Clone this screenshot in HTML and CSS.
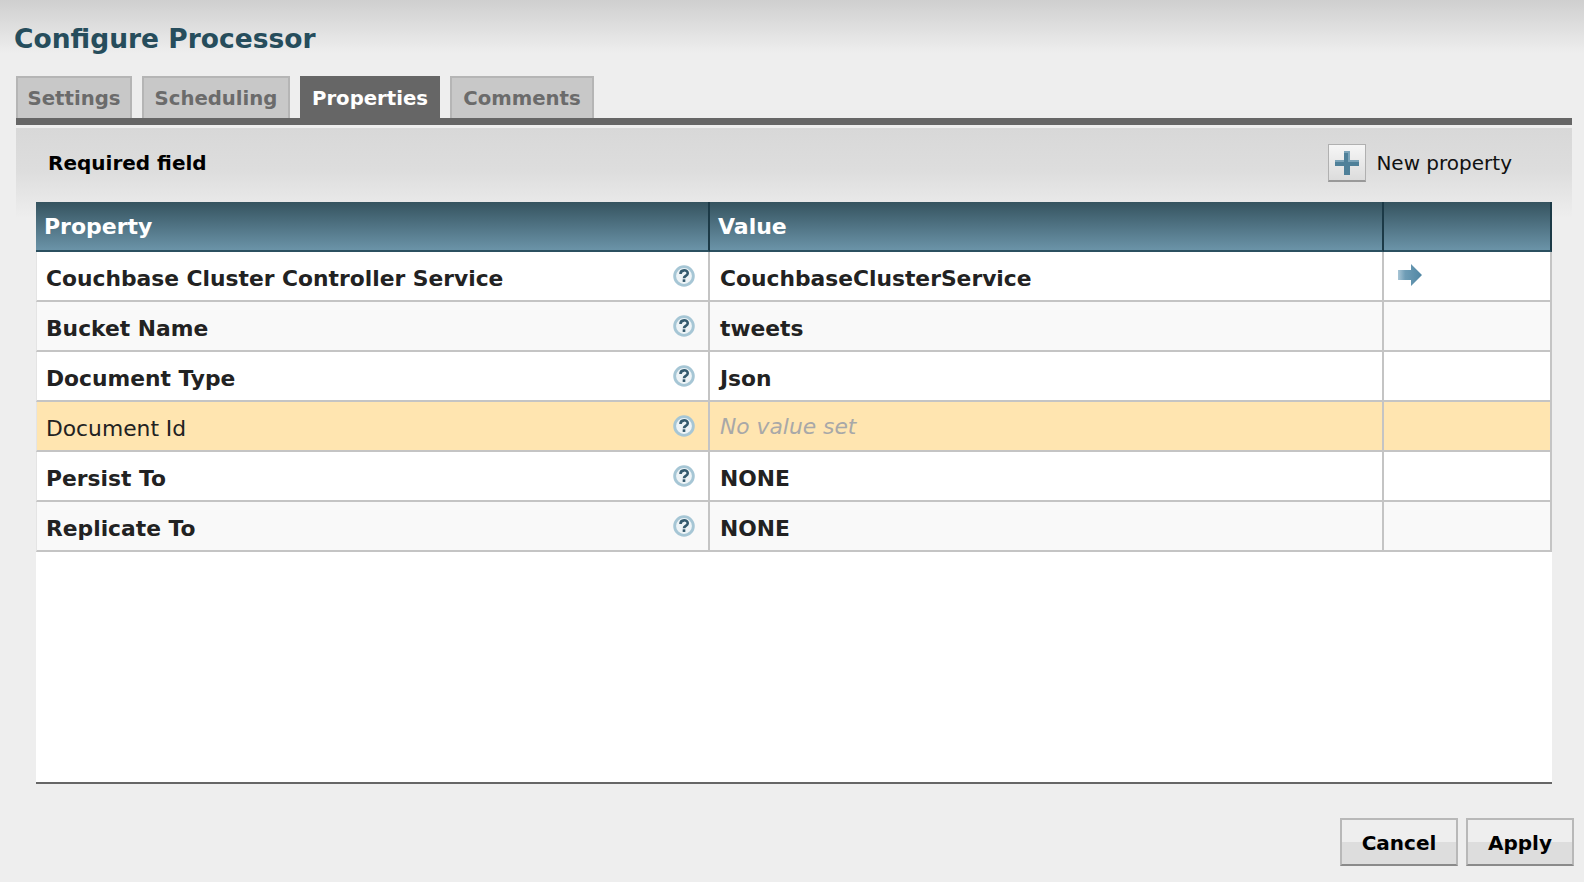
FILE: index.html
```html
<!DOCTYPE html>
<html lang="en">
  <head>
    <meta charset="UTF-8" />
    <title>Configure Processor</title>
    <link rel="stylesheet" href="styles.css">
  </head>
  <body>
    <header class="title-bar">
      <h1>Configure Processor</h1>
    </header>

    <nav class="tabs">
      <a class="tab tab-settings">Settings</a>
      <a class="tab tab-scheduling">Scheduling</a>
      <a class="tab tab-properties active">Properties</a>
      <a class="tab tab-comments">Comments</a>
    </nav>

    <main class="panel">
      <div class="toolbar">
        <span class="required">Required field</span>
        <div class="new-property">
          <span class="plus-button">
            <svg width="26" height="26" viewBox="0 0 26 26">
              <path d="M10 1h6v9h9v6h-9v9h-6v-9H1v-6h9z" fill="#4f8099" />
              <path d="M10 1h6v9h9v2H14V3h-4z" fill="#7ba3b8" />
              <path d="M1 10h9v2H1z" fill="#7ba3b8" />
            </svg>
          </span>
          <span>New property</span>
        </div>
      </div>

      <div class="table">
        <div class="row head">
          <div class="cell">Property</div>
          <div class="cell">Value</div>
          <div class="cell"></div>
        </div>

        <div class="row">
          <div class="cell name"><span>Couchbase Cluster Controller Service</span>
            <svg class="help" viewBox="0 0 20 20"><use href="#help" /></svg></div>
          <div class="cell value">CouchbaseClusterService</div>
          <div class="cell action">
            <svg width="26" height="24" viewBox="0 0 26 24">
              <defs>
                <linearGradient id="arrowFade" x1="0" x2="1" y1="0" y2="0">
                  <stop offset="0" stop-color="#a9c6d6" />
                  <stop offset="0.300" stop-color="#6f9db6" />
                  <stop offset="1" stop-color="#4f86a3" />
                </linearGradient>
              </defs>
              <path d="M1 7h13V1l11 11-11 11v-6H1z" fill="url(#arrowFade)" />
            </svg>
          </div>
        </div>
        <div class="row odd">
          <div class="cell name"><span>Bucket Name</span>
            <svg class="help" viewBox="0 0 20 20"><use href="#help" /></svg></div>
          <div class="cell value">tweets</div>
          <div class="cell"></div>
        </div>
        <div class="row">
          <div class="cell name"><span>Document Type</span>
            <svg class="help" viewBox="0 0 20 20"><use href="#help" /></svg></div>
          <div class="cell value">Json</div>
          <div class="cell"></div>
        </div>
        <div class="row unset">
          <div class="cell name"><span>Document Id</span>
            <svg class="help" viewBox="0 0 20 20"><use href="#help" /></svg></div>
          <div class="cell value">No value set</div>
          <div class="cell"></div>
        </div>
        <div class="row">
          <div class="cell name"><span>Persist To</span>
            <svg class="help" viewBox="0 0 20 20"><use href="#help" /></svg></div>
          <div class="cell value">NONE</div>
          <div class="cell"></div>
        </div>
        <div class="row odd">
          <div class="cell name"><span>Replicate To</span>
            <svg class="help" viewBox="0 0 20 20"><use href="#help" /></svg></div>
          <div class="cell value">NONE</div>
          <div class="cell"></div>
        </div>
      </div>

      <footer class="actions">
        <button class="btn btn-cancel">Cancel</button>
        <button class="btn btn-apply">Apply</button>
      </footer>
    </main>

    <svg class="defs" width="0" height="0">
      <symbol id="help" viewBox="0 0 20 20">
        <circle cx="10" cy="10" r="8.500" fill="#eef4f7" stroke="#a6c6d5" stroke-width="2.600" />
        <path d="M6.800 8.200c0-4.400 6.600-4.400 6.600-.6 0 2.400-3.400 2.300-3.400 4.400" fill="none" stroke="#345a6e" stroke-width="2.400" />
        <rect x="8.800" y="13" width="2.400" height="2.400" fill="#345a6e" />
      </symbol>
    </svg>
  </body>
</html>
```

FILE: styles.css
```css
* {
  box-sizing: border-box;
}
html,
body {
  height: 100%;
}
body {
  margin: 0;
  height: 882px;
  overflow: hidden;
  background-color: #eeeeee;
  font-family: "DejaVu Sans", sans-serif;
  color: #222222;
}
.defs {
  display: block;
}

/* title */
.title-bar {
  height: 76px;
  padding: 23px 0 0 14px;
  background: linear-gradient(#cfcfcf, #eeeeee 70%);
}
h1 {
  margin: 0;
  font-size: 26.500px;
  line-height: 32px;
  font-weight: bold;
  color: #264d5c;
}

/* tabs */
.tabs {
  display: flex;
  margin: 0 12px 0 16px;
  height: 49px;
  border-bottom: 7px solid #666666;
}
.tab {
  display: flex;
  align-items: center;
  justify-content: center;
  height: 42px;
  padding-top: 1px;
  background-color: #c8c8c8;
  border: 2px solid #b5b5b5;
  border-bottom: none;
  font-size: 19.700px;
  font-weight: bold;
  color: #6b6b6b;
}
.tab-settings {
  width: 116px;
  margin-right: 10px;
}
.tab-scheduling {
  width: 148px;
  margin-right: 10px;
}
.tab-properties {
  width: 140px;
  margin-right: 10px;
}
.tab-comments {
  width: 144px;
}
.tab.active {
  background-color: #666666;
  border-color: #666666;
  color: #ffffff;
}

/* panel */
.panel {
  margin: 3px 12px 0 16px;
  background: linear-gradient(#d8d8d8, #dddddd 42px, #eeeeee 90px);
}
.toolbar {
  display: flex;
  justify-content: space-between;
  align-items: center;
  height: 74px;
  padding: 0 60px 4px 32px;
}
.required {
  font-size: 20px;
  font-weight: bold;
  color: #000000;
}
.new-property {
  display: flex;
  align-items: center;
  gap: 10px;
  font-size: 20px;
  color: #111111;
}
.plus-button {
  display: flex;
  align-items: center;
  justify-content: center;
  width: 38px;
  height: 38px;
  background: linear-gradient(#f6f6f6, #dcdcdc);
  border: 1px solid #b0b0b0;
  border-bottom: 2px solid #999999;
}

/* table */
.table {
  margin: 0 20px;
  height: 582px;
  background-color: #ffffff;
  border-bottom: 2px solid #666666;
}
.row {
  display: grid;
  grid-template-columns: 674px 674px 168px;
  height: 50px;
  font-size: 21.800px;
  font-weight: bold;
}
.cell {
  display: flex;
  align-items: center;
  justify-content: space-between;
  padding: 4px 13px 0 9px;
  border-right: 2px solid #c4c4c4;
  border-bottom: 2px solid #c4c4c4;
}
.cell:first-child {
  border-left: 1px solid #e4e4e4;
}
.row.odd {
  background-color: #f9f9f9;
}
.row.unset {
  background-color: #ffe5b0;
}
.row.unset .name {
  font-weight: normal;
}
.row.unset .value {
  padding-top: 0;
  font-weight: normal;
  font-style: italic;
  color: #a8a8a8;
}
.value {
  padding-left: 10px;
}
.help {
  width: 22px;
  height: 22px;
  margin-top: -5px;
  flex-shrink: 0;
}
.action {
  justify-content: flex-start;
  padding-left: 13px;
}
.action svg {
  margin-top: -7px;
}
.row.head {
  height: 50px;
  background: linear-gradient(#35535f, #6d96ab);
  color: #ffffff;
  font-size: 22px;
}
.row.head .cell {
  padding: 0 0 0 8px;
  border-left: none;
  border-right: 2px solid #1c3a47;
  border-bottom: 2px solid #2b5060;
}

/* buttons */
.actions {
  display: flex;
  justify-content: flex-end;
  gap: 8px;
  margin: 34px -2px 0 0;
}
.btn {
  height: 48px;
  padding-top: 2px;
  background: linear-gradient(#eeeeee 50%, #dddddd 50%);
  border: 2px solid #b8b8b8;
  border-bottom-color: #8a8a8a;
  font-family: "DejaVu Sans", sans-serif;
  font-size: 20px;
  font-weight: bold;
  color: #000000;
}
.btn-cancel {
  width: 118px;
}
.btn-apply {
  width: 108px;
}
```
